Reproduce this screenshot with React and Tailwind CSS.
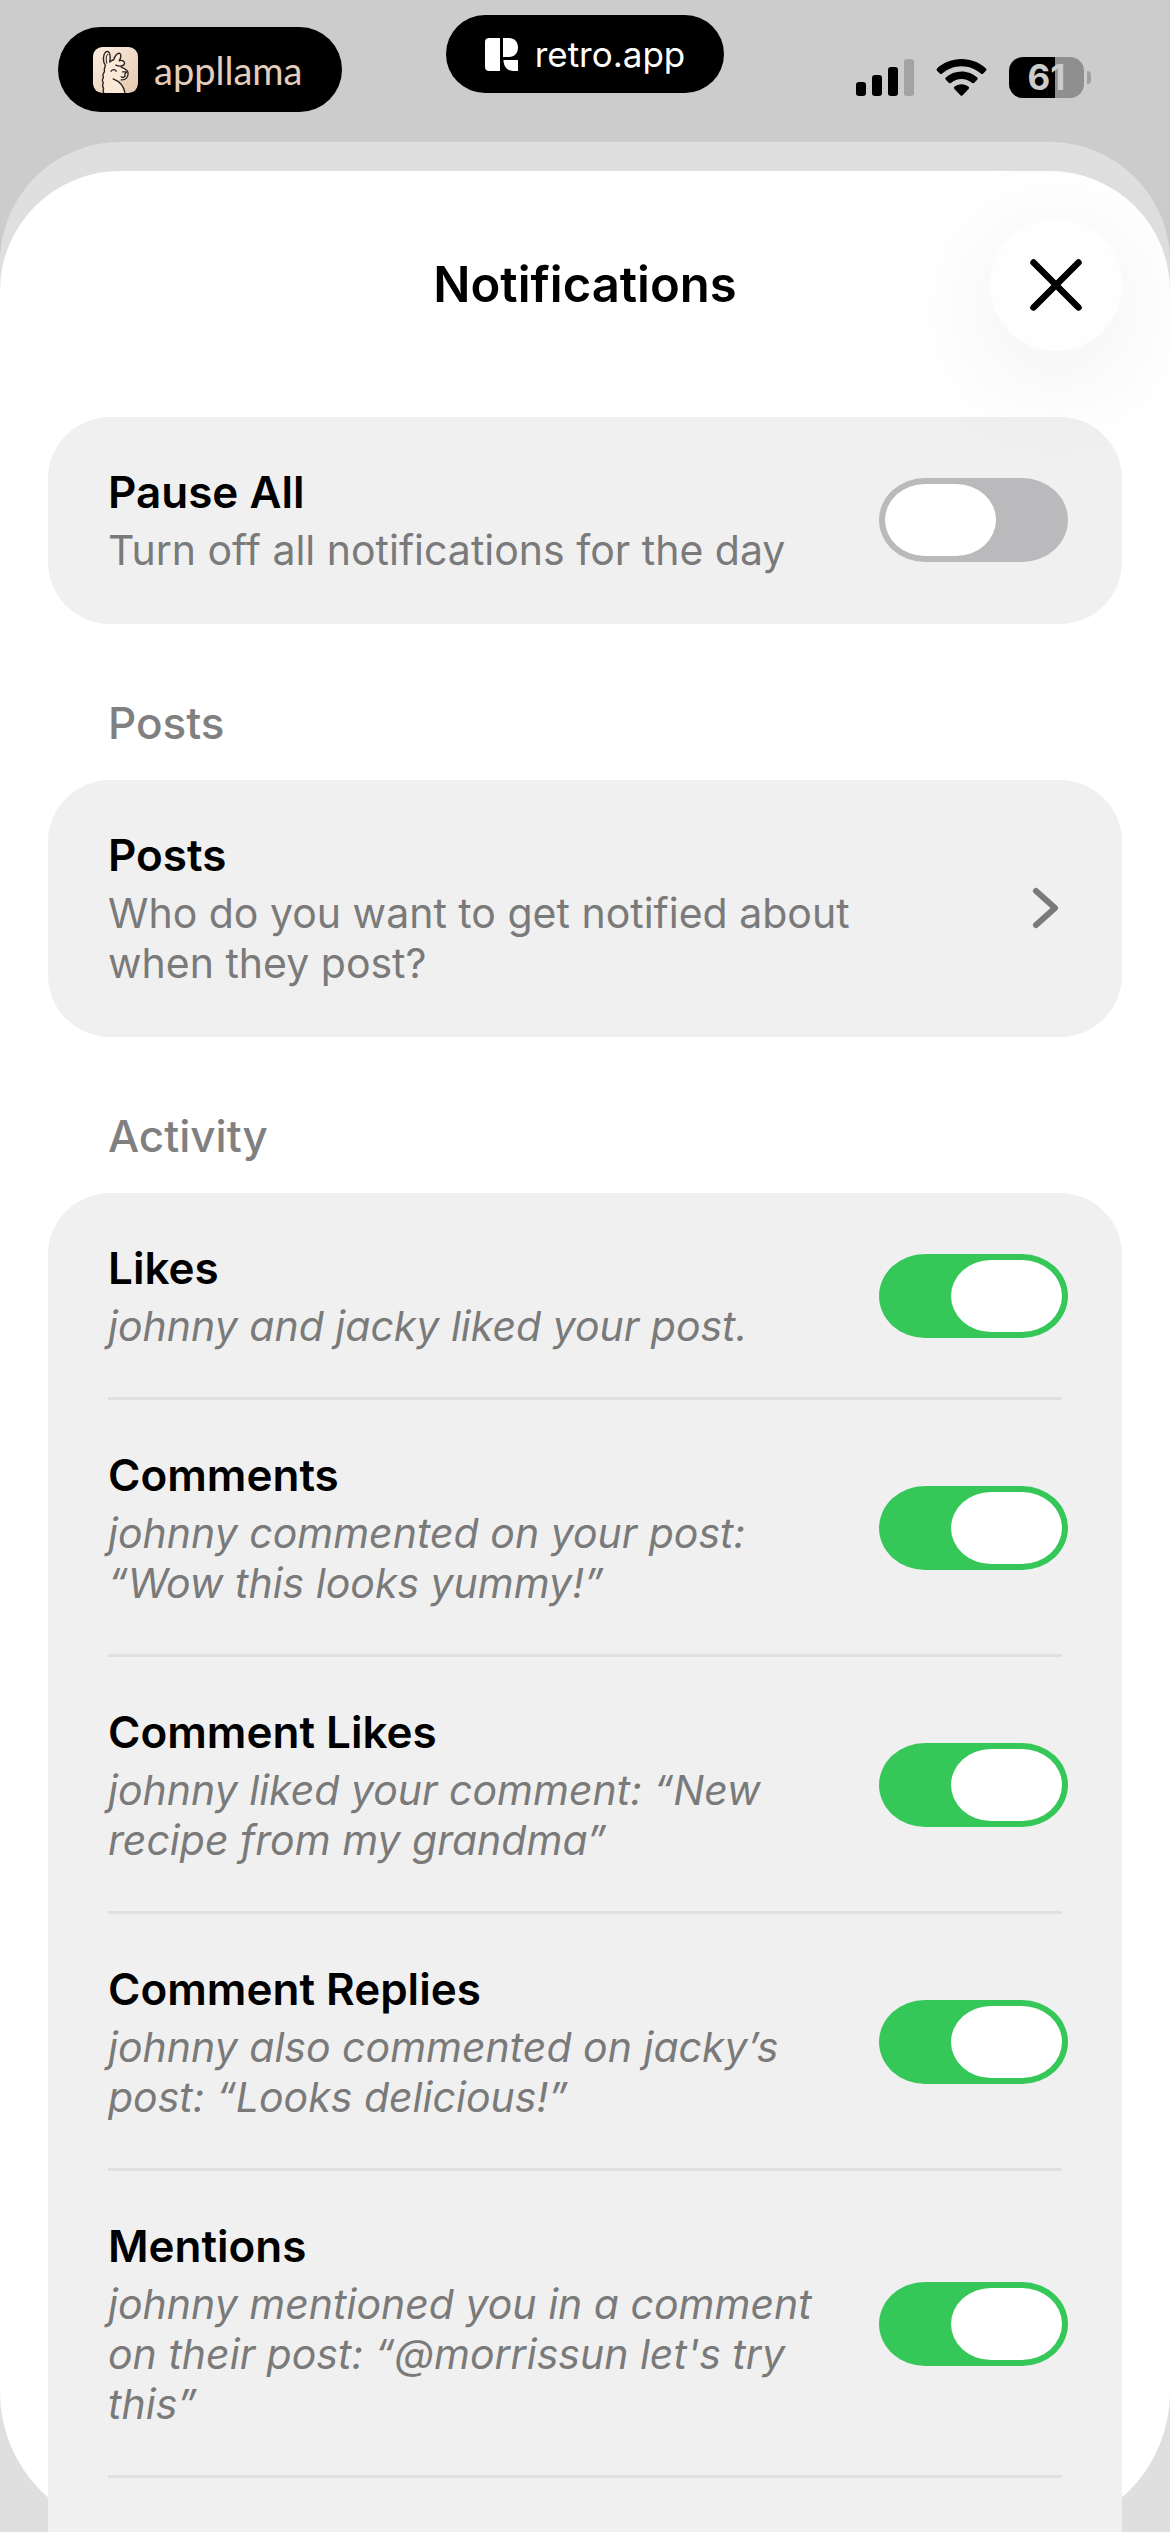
import { useState } from 'react'

const ACTIVITY = [
  { id: 'likes', title: 'Likes', text: 'johnny and jacky liked your post.' },
  { id: 'comments', title: 'Comments', text: 'johnny commented on your post: “Wow this looks yummy!”' },
  { id: 'comment-likes', title: 'Comment Likes', text: 'johnny liked your comment: “New recipe from my grandma”' },
  { id: 'comment-replies', title: 'Comment Replies', text: 'johnny also commented on jacky’s post: “Looks delicious!”' },
  { id: 'mentions', title: 'Mentions', text: 'johnny mentioned you in a comment on their post: “@morrissun let\'s try this”' },
]

function LlamaIcon() {
  return (
    <svg viewBox="0 0 134 137" className="h-[46px] w-[45px] shrink-0" aria-hidden="true">
      <defs>
        <linearGradient id="llama-bg" x1="0" y1="0" x2="1" y2="1">
          <stop offset="0" stopColor="#fbeee0" />
          <stop offset="1" stopColor="#e6c8b0" />
        </linearGradient>
      </defs>
      <rect width="134" height="137" rx="28" fill="url(#llama-bg)" />
      <path
        d="M32 137C26 130 35 126 30 120C25 113 34 109 29 103C25 96 34 92 30 86C27 79 36 77 34 70C32 64 38 60 36 52C28 44 30 15 42 13C52 13 52 32 50 44L62 38C64 26 74 17 80 19C85 24 82 34 78 41C86 38 95 42 94 50C92 56 84 58 84 60C92 64 104 68 104 76C107 88 98 99 84 98C74 99 64 96 58 94C78 102 92 118 95 137Z"
        fill="#fbe9d8"
      />
      <g fill="none" stroke="#26211e" strokeWidth="4" strokeLinecap="round" strokeLinejoin="round">
        <path d="M32 136C26 130 35 126 30 120C25 113 34 109 29 103C25 96 34 92 30 86C27 79 36 77 34 70C32 64 38 60 36 52C28 44 30 15 42 13C52 13 52 32 50 44" />
        <path d="M41 48C37 36 40 24 44 22" strokeWidth="3" />
        <path d="M50 44C54 40 58 39 62 38C64 26 74 17 80 19C85 24 82 34 78 41C86 38 95 42 94 50C92 56 80 60 68 54" />
        <path d="M84 60C94 64 104 68 104 76C107 88 98 99 84 98" />
        <path d="M60 95C78 102 92 118 95 136" />
        <path d="M54 72C58 66 66 66 69 72" />
        <path d="M88 74L100 74L95 81L95 88C90 93 84 90 84 88" />
      </g>
    </svg>
  )
}

function RetroIcon() {
  return (
    <svg viewBox="0 0 33 33" className="size-[33px] shrink-0" fill="white" aria-hidden="true">
      <path d="M4 0H15V33H4C1.500 33 0 31.500 0 29V4C0 1.500 1.500 0 4 0Z" />
      <path d="M18 0H24C29.500 0 33 4 33 9.500C33 15 29.500 19 24 19H18Z" />
      <path d="M18.500 22H33V33H28C22 33 18.500 28 18.500 22Z" />
    </svg>
  )
}

function StatusIcons() {
  return (
    <div className="flex items-center">
      <svg viewBox="0 0 58 37" className="h-[37px] w-[58px]" aria-label="Signal">
        <rect x="0" y="23" width="10" height="14" rx="3" />
        <rect x="16" y="16" width="10" height="21" rx="3" />
        <rect x="32" y="8" width="10" height="29" rx="3" />
        <rect x="48" y="0" width="10" height="37" rx="3" fill="#a3a3a3" />
      </svg>
      <svg viewBox="0 0 51 37" className="ml-[22px] h-[37px] w-[51px]" aria-label="Wi-Fi">
        <path d="M25.500 0C35 0 43.500 3.500 50 9.500Q51 10.600 50 11.700L47.200 14.600Q46 15.600 44.800 14.600C39.500 10 33 7.300 25.500 7.300C18 7.300 11.500 10 6.200 14.600Q5 15.600 3.800 14.600L1 11.700Q0 10.600 1 9.500C7.500 3.500 16 0 25.500 0Z" />
        <path d="M25.500 12.600C31.500 12.600 37 14.900 41.200 18.600Q42.200 19.700 41.200 20.800L38.200 23.700Q37 24.700 35.800 23.800C33 21.400 29.500 20 25.500 20C21.500 20 18 21.400 15.200 23.800Q14 24.700 12.800 23.700L9.800 20.800Q8.800 19.700 9.800 18.600C14 14.900 19.500 12.600 25.500 12.600Z" />
        <path d="M25.500 25.200C28.300 25.200 30.700 26.200 32.600 27.700Q33.700 28.700 32.600 29.900L26.600 36.200Q25.500 37.200 24.400 36.200L18.400 29.900Q17.300 28.700 18.400 27.700C20.300 26.200 22.700 25.200 25.500 25.200Z" />
      </svg>
      <div className="ml-[22px] flex h-[41px] w-[75px] items-center justify-center rounded-[14px] bg-linear-to-r from-black from-61% to-[#8f8f8f] to-61% text-[35px] leading-none font-bold text-[#cccccc]">
        61
      </div>
      <div className="ml-[3px] h-[13px] w-1 rounded-r-full bg-[#a0a0a0]" />
    </div>
  )
}

function Row({ title, text, italic, children }) {
  return (
    <>
      <span className="flex min-w-0 flex-1 flex-col gap-[6px]">
        <span className="text-[44px] leading-[54px] font-semibold text-black">{title}</span>
        <span className={italic ? 'text-[41px] leading-[50px] text-[#7a7a7a] italic' : 'text-[41px] leading-[50px] text-[#7a7a7a]'}>
          {text}
        </span>
      </span>
      {children}
    </>
  )
}

function ToggleRow({ id, title, text, italic, checked, onChange, divider }) {
  return (
    <label
      htmlFor={id}
      className={
        divider
          ? 'mx-[60px] flex items-center gap-[60px] border-b-3 border-[#e0e0e0] pt-12 pb-[46px]'
          : 'mx-[60px] flex items-center gap-[60px] pt-12 pb-[49px]'
      }
    >
      <Row title={title} text={text} italic={italic}>
        <input
          id={id}
          type="checkbox"
          role="switch"
          checked={checked}
          onChange={onChange}
          className="-mr-[6px] flex h-[84px] w-[189px] shrink-0 appearance-none items-center rounded-[46px/42px] bg-[#bababc] p-[6px] transition-colors before:block before:h-[72px] before:w-[111px] before:rounded-[40px/36px] before:bg-white before:transition-transform checked:bg-[#36c759] checked:before:translate-x-[66px]"
        />
      </Row>
    </label>
  )
}

function SectionTitle({ children }) {
  return <h2 className="mx-[60px] mt-[72px] mb-[30px] text-[44px] leading-[54px] font-medium text-[#808080]">{children}</h2>
}

export default function App() {
  const [enabled, setEnabled] = useState({
    pause: false,
    likes: true,
    comments: true,
    'comment-likes': true,
    'comment-replies': true,
    mentions: true,
  })

  const toggle = (id) => setEnabled((prev) => ({ ...prev, [id]: !prev[id] }))

  return (
    <div className="flex min-h-screen flex-col overflow-hidden bg-[#cccccc] font-['Inter',sans-serif] text-black">
      <header className="grid h-[142px] grid-cols-[1fr_auto_1fr] items-start">
        <div className="mt-[27px] ml-[58px] flex h-[85px] w-[284px] items-center gap-4 rounded-full bg-black pl-[35px]">
          <LlamaIcon />
          <span className="font-['Lato',sans-serif] text-[38px] leading-[46px] text-[#e3cdbc]">appllama</span>
        </div>
        <div className="mt-[15px] flex h-[78px] w-[278px] items-center justify-center gap-[17px] rounded-full bg-black text-[35px] text-white">
          <RetroIcon />
          <span className="leading-[46px]">retro.app</span>
        </div>
        <div className="mt-[57px] mr-[79px] justify-self-end">
          <StatusIcons />
        </div>
      </header>

      {/* back sheet peeking out behind the front one */}
      <div className="flex flex-1 flex-col rounded-t-[120px] bg-[#dfdfdf] pt-[29px]">
        <main className="flex flex-1 flex-col rounded-t-[120px] rounded-b-[140px] bg-white px-12 pt-12">
          <div className="relative z-10 mb-[66px] grid grid-cols-[132px_1fr_132px] items-center">
            <h1 className="col-start-2 text-center text-[49px] leading-[60px] font-semibold">Notifications</h1>
            <button
              type="button"
              aria-label="Close"
              className="flex size-[132px] items-center justify-center rounded-full bg-[#fefefe] shadow-[0_24px_120px_rgba(0,0,0,0.08)]"
            >
              <svg viewBox="0 0 52 52" className="size-[52px]" fill="none" stroke="black" strokeWidth="6.500" strokeLinecap="round">
                <path d="M3.500 3.500L48.500 48.500M48.500 3.500L3.500 48.500" />
              </svg>
            </button>
          </div>

          <section className="rounded-[62px] bg-[#f0f0f0]">
            <ToggleRow
              id="pause"
              title="Pause All"
              text="Turn off all notifications for the day"
              checked={enabled.pause}
              onChange={() => toggle('pause')}
            />
          </section>

          <SectionTitle>Posts</SectionTitle>
          <section className="rounded-[62px] bg-[#f0f0f0]">
            <a href="#posts" className="mx-[60px] flex items-center gap-[120px] pt-12 pb-[49px]">
              <Row title="Posts" text="Who do you want to get notified about when they post?">
                <svg viewBox="0 0 30 42" className="h-[42px] w-[30px] shrink-0" fill="none" stroke="#7a7a7a" strokeWidth="6" strokeLinecap="round" strokeLinejoin="round">
                  <path d="M4 4L23 21L4 38" />
                </svg>
              </Row>
            </a>
          </section>

          <SectionTitle>Activity</SectionTitle>
          <section className="flex-1 rounded-t-[62px] bg-[#f0f0f0]">
            {ACTIVITY.map((item) => (
              <ToggleRow
                key={item.id}
                id={item.id}
                title={item.title}
                text={item.text}
                italic
                divider
                checked={enabled[item.id]}
                onChange={() => toggle(item.id)}
              />
            ))}
          </section>
        </main>
      </div>
    </div>
  )
}
